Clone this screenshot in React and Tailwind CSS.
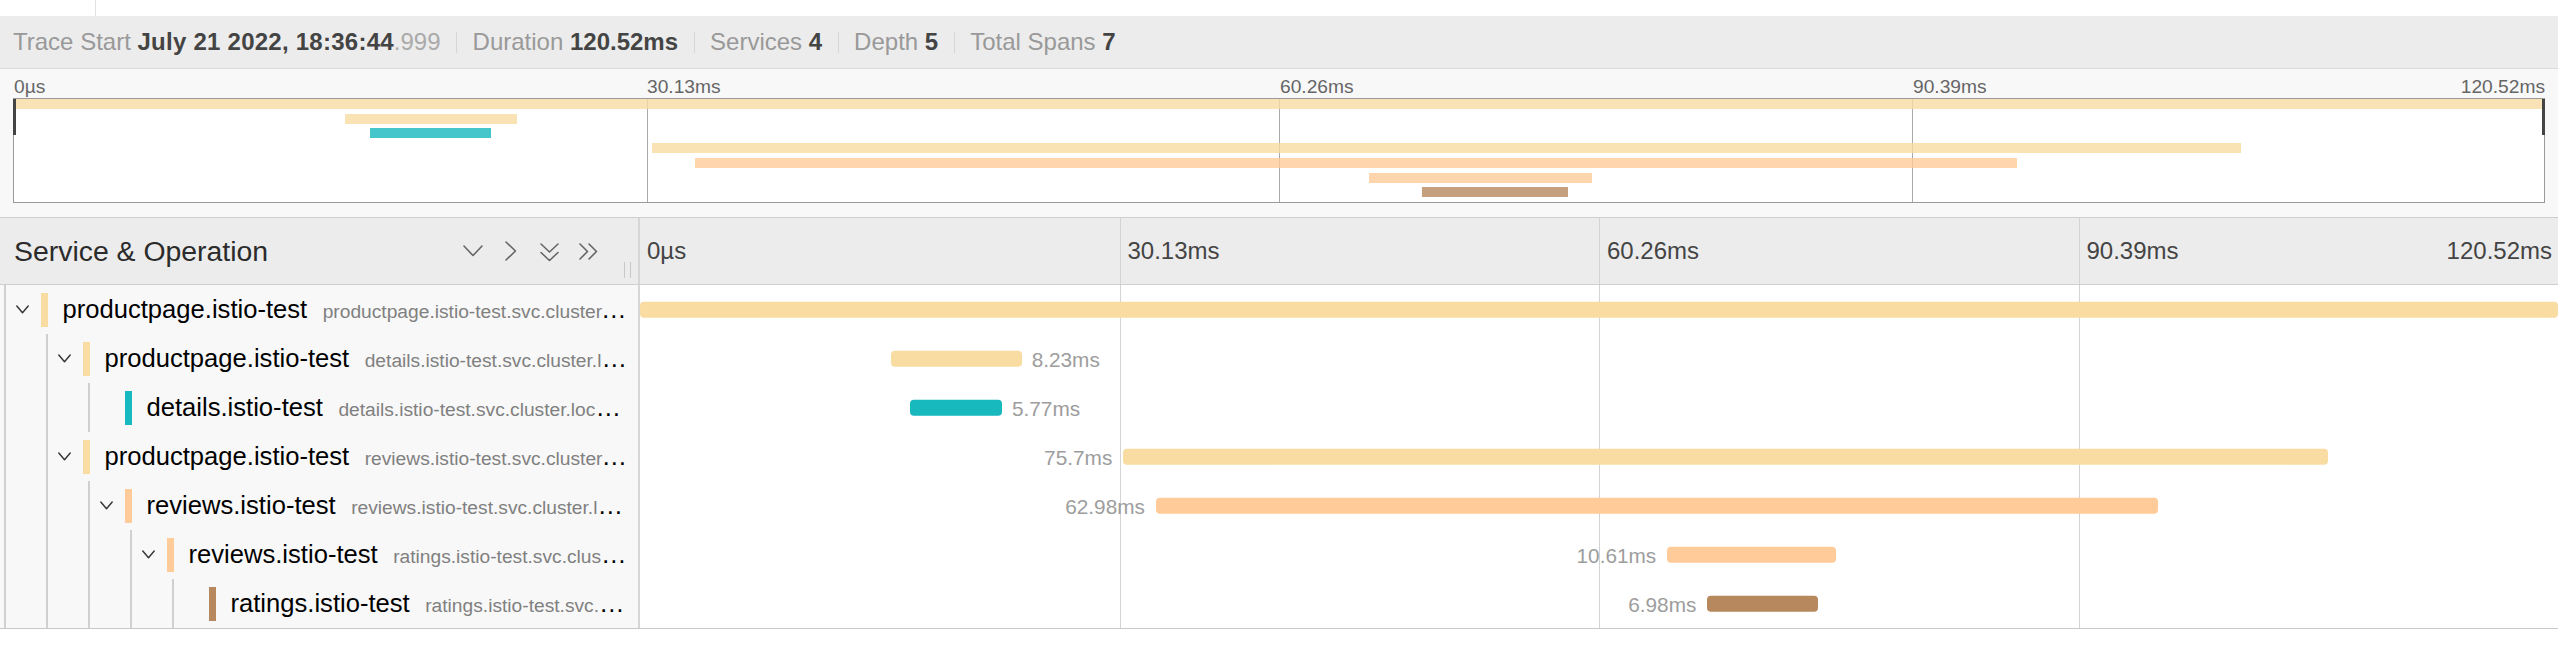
import React from 'react';

const TOTAL = 120.52;

const spans = [
  { depth: 0, service: 'productpage.istio-test', op: 'productpage.istio-test.svc.cluster.local:9080/productpage', color: '#F8DCA1', start: 0, dur: 120.52, toggle: true, side: null },
  { depth: 1, service: 'productpage.istio-test', op: 'details.istio-test.svc.cluster.local:9080/*', color: '#F8DCA1', start: 15.75, dur: 8.23, toggle: true, side: 'right' },
  { depth: 2, service: 'details.istio-test', op: 'details.istio-test.svc.cluster.local:9080/*', color: '#17B8BE', start: 16.97, dur: 5.77, toggle: false, side: 'right' },
  { depth: 1, service: 'productpage.istio-test', op: 'reviews.istio-test.svc.cluster.local:9080/*', color: '#F8DCA1', start: 30.37, dur: 75.7, toggle: true, side: 'left' },
  { depth: 2, service: 'reviews.istio-test', op: 'reviews.istio-test.svc.cluster.local:9080/*', color: '#FFCB99', start: 32.42, dur: 62.98, toggle: true, side: 'left' },
  { depth: 3, service: 'reviews.istio-test', op: 'ratings.istio-test.svc.cluster.local:9080/*', color: '#FFCB99', start: 64.55, dur: 10.61, toggle: true, side: 'left' },
  { depth: 4, service: 'ratings.istio-test', op: 'ratings.istio-test.svc.cluster.local:9080/*', color: '#B7885E', start: 67.07, dur: 6.98, toggle: false, side: 'left' },
];

const pct = (v) => (v / TOTAL) * 100;

const Sep = () => <span className="mx-[15.5px] h-[21px] w-px bg-[#d6d6d6]" />;

const TraceHeader = () => (
  <div className="flex h-[53px] items-center border-b border-[#dcdcdc] bg-[#ececec] pl-[13px] text-[24px] text-[#999]">
    <span>
      Trace Start <b className="tracking-[0.25px] text-[#444]">July 21 2022, 18:36:44</b>
      <span className="text-[#aaa]">.999</span>
    </span>
    <Sep />
    <span>
      Duration <b className="text-[#444]">120.52ms</b>
    </span>
    <Sep />
    <span>
      Services <b className="text-[#444]">4</b>
    </span>
    <Sep />
    <span>
      Depth <b className="text-[#444]">5</b>
    </span>
    <Sep />
    <span>
      Total Spans <b className="text-[#444]">7</b>
    </span>
  </div>
);

const Minimap = () => (
  <div className="bg-[#f8f8f8] px-[13px] pt-[4px] pb-[14px]">
    <div className="grid h-[24px] grid-cols-4 items-center text-[19.2px] text-[#666]">
      <span className="pl-px">0µs</span>
      <span className="pl-px">30.13ms</span>
      <span className="pl-px">60.26ms</span>
      <div className="flex justify-between pl-px">
        <span>90.39ms</span>
        <span>120.52ms</span>
      </div>
    </div>
    <div className="relative mt-px h-[105px] border border-[#9a9a9a] bg-white">
      <div className="absolute inset-0 grid grid-cols-4">
        <div />
        <div className="border-l border-[#aaa]" />
        <div className="border-l border-[#aaa]" />
        <div className="border-l border-[#aaa]" />
      </div>
      <div className="absolute inset-0 flex flex-col">
        {spans.map((s, i) => (
          <div key={i} className="relative flex-1">
            <div
              className="absolute top-0 h-[10px] opacity-80"
              style={{ left: `${pct(s.start)}%`, width: `${pct(s.dur)}%`, backgroundColor: s.color }}
            />
          </div>
        ))}
      </div>
      <div className="absolute -left-px top-0 h-[36px] w-[3px] bg-[#444]" />
      <div className="absolute -right-px top-0 h-[36px] w-[3px] bg-[#444]" />
    </div>
  </div>
);

const Icon = ({ w, h, children, className }) => (
  <svg width={w} height={h} viewBox={`0 0 ${w} ${h}`} className={className} fill="none" stroke="#666" strokeWidth="1.6" strokeLinecap="round" strokeLinejoin="round">
    {children}
  </svg>
);

const ColumnHeader = () => (
  <div className="flex h-[68px] border-y border-[#cfcfcf] bg-[#ececec]">
    <div className="flex w-[640px] shrink-0 items-center border-r-2 border-[#d6d6d6]">
      <span className="flex-1 pl-[14px] text-[28.4px] text-[#2b2b2b]">Service &amp; Operation</span>
      <Icon w={20} h={12}>
        <polyline points="1,1 10,10.5 19,1" />
      </Icon>
      <Icon w={12} h={20} className="ml-[22px]">
        <polyline points="1,1 10.5,10 1,19" />
      </Icon>
      <Icon w={19} h={20} className="ml-[23px] mt-[3px]">
        <polyline points="1,1 9.5,9 18,1" />
        <polyline points="1,9.5 9.5,17.5 18,9.5" />
      </Icon>
      <Icon w={21} h={17} className="ml-[19px]">
        <polyline points="2,1 9.5,8.5 2,16" />
        <polyline points="11,1 18.5,8.5 11,16" />
      </Icon>
      <div className="mb-[6px] ml-[25px] mr-[7px] flex h-[16px] gap-[5px] self-end">
        <span className="h-full w-px bg-[#c8c8c8]" />
        <span className="h-full w-px bg-[#c8c8c8]" />
      </div>
    </div>
    <div className="grid flex-1 grid-cols-4 text-[24px] text-[#444]">
      <div className="flex items-center pl-[7px]">0µs</div>
      <div className="flex items-center border-l border-[#d3d3d3] pl-[7px]">30.13ms</div>
      <div className="flex items-center border-l border-[#d3d3d3] pl-[7px]">60.26ms</div>
      <div className="flex items-center justify-between border-l border-[#d3d3d3] pl-[7px] pr-[6px]">
        <span>90.39ms</span>
        <span>120.52ms</span>
      </div>
    </div>
  </div>
);

const Guide = () => (
  <div className="flex h-full w-[42px] shrink-0">
    <span className="ml-[4px] h-full w-[2px] bg-[#d0d0d0]" />
  </div>
);

const SpanRow = ({ s }) => {
  const left = pct(s.start);
  const width = pct(s.dur);
  return (
    <div className="flex h-[49px]">
      <div className="flex w-[640px] shrink-0 items-center border-r-2 border-[#d6d6d6] bg-[#f8f8f8]">
        {Array.from({ length: s.depth }).map((_, i) => (
          <Guide key={i} />
        ))}
        <div className="flex h-full w-[41px] shrink-0 items-center">
          <span className="ml-[4px] h-full w-[2px] bg-[#d0d0d0]" />
          {s.toggle && (
            <svg width="13" height="9" viewBox="0 0 13 9" className="ml-[10px]" fill="none" stroke="#333" strokeWidth="1.4" strokeLinecap="round" strokeLinejoin="round">
              <polyline points="0.8,1 6.5,7.8 12.2,1" />
            </svg>
          )}
        </div>
        <span className="h-[34px] w-[7px] shrink-0" style={{ backgroundColor: s.color }} />
        <div className="ml-[14.5px] min-w-0 flex-1 truncate pr-[8px] text-[25.6px] text-black">
          {s.service}
          <span className="ml-[15.5px] text-[19.2px] text-[#808080]">{s.op}</span>
        </div>
      </div>
      <div className="relative flex-1">
        <div className="absolute inset-0 grid grid-cols-4">
          <div />
          <div className="border-l border-[#d3d3d3]" />
          <div className="border-l border-[#d3d3d3]" />
          <div className="border-l border-[#d3d3d3]" />
        </div>
        <div
          className="absolute top-1/2 h-[16.5px] -translate-y-1/2 rounded-[4px]"
          style={{ left: `${left}%`, width: `${width}%`, backgroundColor: s.color }}
        />
        {s.side === 'right' && (
          <span
            className="absolute top-1/2 -translate-y-[42%] text-[20.8px] leading-none text-[#9d9d9d]"
            style={{ left: `calc(${left + width}% + 10px)` }}
          >
            {s.dur}ms
          </span>
        )}
        {s.side === 'left' && (
          <span
            className="absolute top-1/2 -translate-y-[42%] text-[20.8px] leading-none text-[#9d9d9d]"
            style={{ right: `calc(${100 - left}% + 11px)` }}
          >
            {s.dur}ms
          </span>
        )}
      </div>
    </div>
  );
};

export default function App() {
  return (
    <div className="min-h-screen w-full bg-white font-['Liberation_Sans',Arial,sans-serif]">
      <div className="h-[16px] bg-white">
        <div className="h-full w-[96px] border-r border-[#e2e2e2]" />
      </div>
      <TraceHeader />
      <Minimap />
      <ColumnHeader />
      <div className="border-b border-[#c8c8c8]">
        {spans.map((s, i) => (
          <SpanRow key={i} s={s} />
        ))}
      </div>
    </div>
  );
}
